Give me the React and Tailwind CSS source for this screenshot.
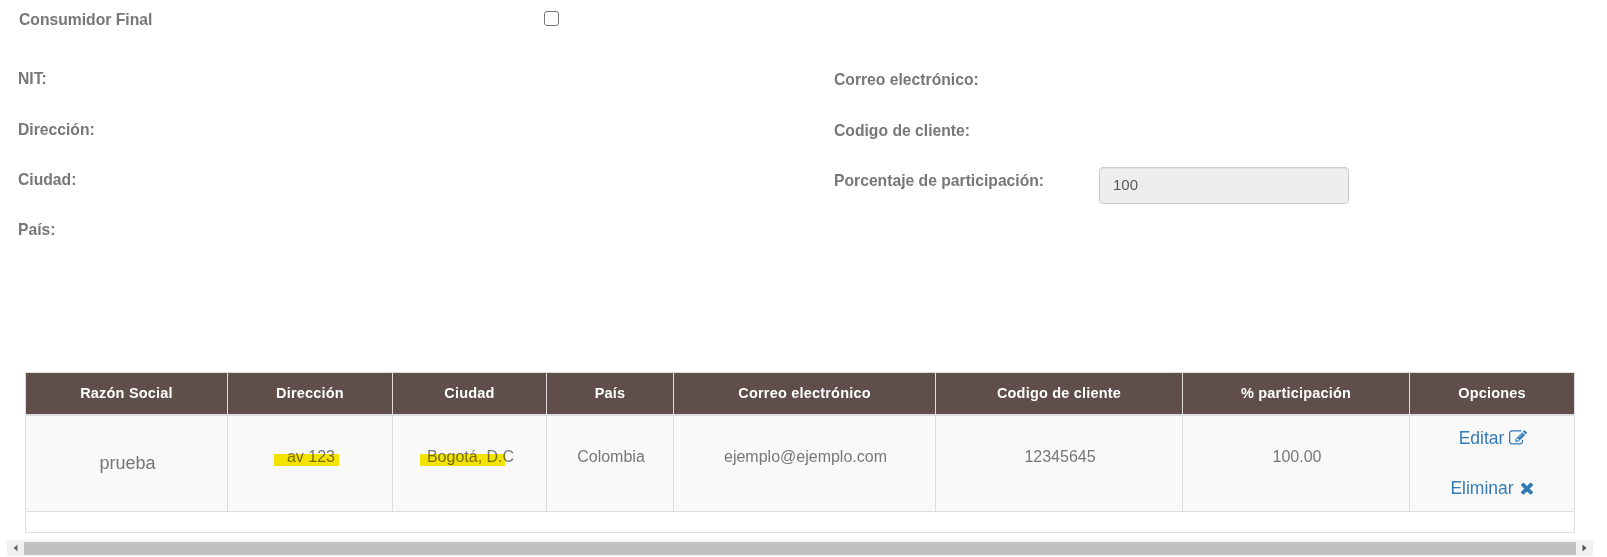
import React from 'react'

const headers = [
  ['Razón Social', 'w-[202px]'],
  ['Dirección', 'w-[165px]'],
  ['Ciudad', 'w-[154px]'],
  ['País', 'w-[127px]'],
  ['Correo electrónico', 'w-[262px]'],
  ['Codigo de cliente', 'w-[247px]'],
  ['% participación', 'w-[227px]'],
  ['Opciones', 'w-[165px]'],
]

function Label({ children, className = '' }) {
  return <label className={`text-[15.7px] leading-5 font-bold text-[#777] ${className}`}>{children}</label>
}

function Marker({ className }) {
  return <span className={`absolute top-[8px] h-3 bg-[#fae900] mix-blend-multiply ${className}`} />
}

function EditIcon() {
  return (
    <svg viewBox="0 0 1792 1792" className="w-[18px] h-[18px]" fill="currentColor">
      <path d="M888 1184l116-116-152-152-116 116v56h96v96h56zm440-720q-16-16-33 1l-350 350q-17 17-1 33t33-1l350-350q17-17 1-33zm80 594v190q0 119-84.500 203.500t-203.500 84.500h-832q-119 0-203.500-84.500t-84.500-203.500v-832q0-119 84.500-203.500t203.500-84.500h832q63 0 117 25 15 7 18 23 3 17-9 29l-49 49q-14 14-32 8-23-6-45-6h-832q-66 0-113 47t-47 113v832q0 66 47 113t113 47h832q66 0 113-47t47-113v-126q0-13 9-22l64-64q15-15 35-7t20 29zm-96-738l288 288-672 672h-288v-288zm444 132l-92 92-288-288 92-92q28-28 68-28t68 28l152 152q28 28 28 68t-28 68z" />
    </svg>
  )
}

function RemoveIcon() {
  return (
    <svg viewBox="0 0 1792 1792" className="w-[18px] h-[18px]" fill="currentColor">
      <path d="M1490 1322q0 40-28 68l-136 136q-28 28-68 28t-68-28l-294-294-294 294q-28 28-68 28t-68-28l-136-136q-28-28-28-68t28-68l294-294-294-294q-28-28-28-68t28-68l136-136q28-28 68-28t68 28l294 294 294-294q28-28 68-28t68 28l136 136q28 28 28 68t-28 68l-294 294 294 294q28 28 28 68z" />
    </svg>
  )
}

export default function App() {
  const cell = 'border border-[#ddd] align-top text-center pl-[2px] pt-[30px] text-base leading-[22px] text-[#777]'
  return (
    <div className="bg-white h-[557px] overflow-hidden font-['Liberation_Sans',Arial,sans-serif]">
      {/* datos del cliente */}
      <div className="h-[372px] pt-[10px]">
        <div className="flex pl-[19px] h-5 items-center">
          <div className="w-[525px]"><Label>Consumidor Final</Label></div>
          <input type="checkbox" className="appearance-none w-[15px] h-[15px] -mt-[3px] rounded-[3px] border border-[#767676] bg-white" />
        </div>
        <div className="grid grid-cols-[816px_1fr] pl-[18px] pt-[39px]">
          <div className="flex flex-col gap-[30px]">
            <Label className="mb-[1px]">NIT:</Label>
            <Label>Dirección:</Label>
            <Label>Ciudad:</Label>
            <Label>País:</Label>
          </div>
          <div className="flex flex-col gap-[30px] pt-[1px]">
            <Label className="mb-[1px]">Correo electrónico:</Label>
            <Label>Codigo de cliente:</Label>
            <div className="flex items-start -mt-[4px]">
              <div className="w-[265px] pt-[2px]"><Label>Porcentaje de participación:</Label></div>
              <input
                readOnly
                value="100"
                className="w-[250px] h-[37px] pl-[13px] pr-3 pb-[2px] rounded border border-[#ccc] bg-[#eee] text-[15px] text-[#555] shadow-[inset_0_1px_1px_rgba(0,0,0,0.075)] outline-none"
              />
            </div>
          </div>
        </div>
      </div>

      {/* tabla */}
      <div className="pl-[25px]">
        <table className="w-[1549px] table-fixed border-collapse border border-[#ddd]">
          <thead>
            <tr className="h-[42px] bg-[#5f4e4a]">
              {headers.map(([text, width]) => (
                <th key={text} className={`${width} border border-[#ddd] border-b-2 pt-[2px] text-center text-[14.5px] tracking-[0.2px] font-bold text-white`}>
                  {text}
                </th>
              ))}
            </tr>
          </thead>
          <tbody>
            <tr className="h-[97px] bg-[#f9f9f9]">
              <td className={`${cell} !pt-[36px] !text-lg`}>prueba</td>
              <td className={cell}>
                <span className="relative inline-block">
                  av 123
                  <Marker className="-left-[13px] w-[65px]" />
                </span>
              </td>
              <td className={cell}>
                <span className="relative inline-block">
                  Bogotá, D.C
                  <Marker className="-left-[7px] w-[85px]" />
                </span>
              </td>
              <td className={cell}>Colombia</td>
              <td className={cell}>ejemplo@ejemplo.com</td>
              <td className={cell}>12345645</td>
              <td className={cell}>100.00</td>
              <td className="border border-[#ddd] align-top text-center pl-[2px] pt-[4px] text-[17.5px] leading-6 text-[#337ab7]">
                <a className="flex items-center justify-center gap-[5px] h-[36px]">Editar <EditIcon /></a>
                <a className="flex items-center justify-center gap-[4px] h-[36px] mt-[14px]">Eliminar <RemoveIcon /></a>
              </td>
            </tr>
            <tr className="h-[21px]"><td colSpan={8} className="border border-[#ddd]"></td></tr>
          </tbody>
        </table>
      </div>

      {/* barra de scroll */}
      <div className="ml-[7px] mt-[7px] w-[1586px] h-4 bg-[#f1f1f1] flex items-center">
        <svg viewBox="0 0 16 16" className="w-[17px] h-4 shrink-0"><path d="M10 4.500v7L6 8z" fill="#6b6b6b" /></svg>
        <div className="flex-1 h-[13px] bg-[#c1c1c1]" />
        <svg viewBox="0 0 16 16" className="w-[17px] h-4 shrink-0"><path d="M6 4.500v7L10 8z" fill="#505050" /></svg>
      </div>
    </div>
  )
}
